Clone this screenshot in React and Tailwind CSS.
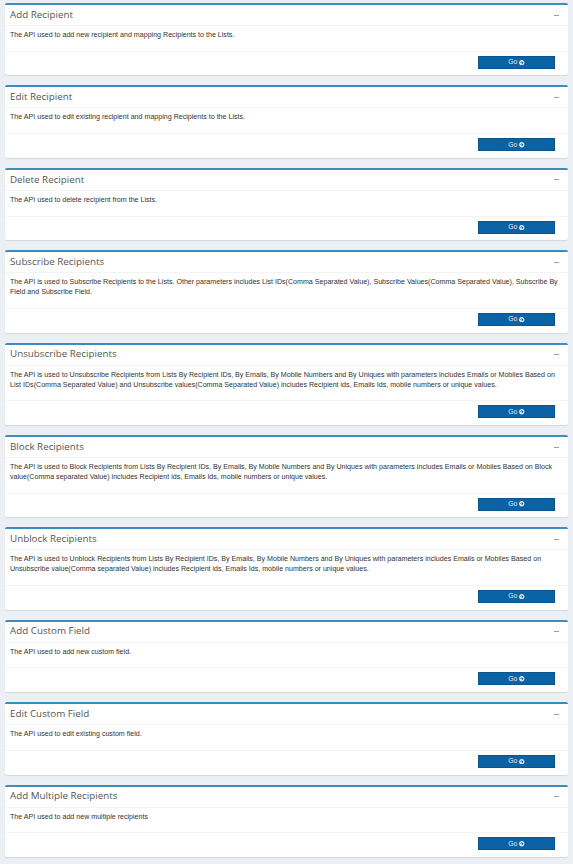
import { FaArrowCircleRight } from "react-icons/fa";

const apis = [
  { title: "Add Recipient", text: "The API used to add new recipient and mapping Recipients to the Lists." },
  { title: "Edit Recipient", text: "The API used to edit existing recipient and mapping Recipients to the Lists." },
  { title: "Delete Recipient", text: "The API used to delete recipient from the Lists." },
  {
    title: "Subscribe Recipients",
    text: "The API is used to Subscribe Recipients to the Lists. Other parameters includes List IDs(Comma Separated Value), Subscribe Values(Comma Separated Value), Subscribe By Field and Subscribe Field.",
  },
  {
    title: "Unsubscribe Recipients",
    text: "The API is used to Unsubscribe Recipients from Lists By Recipient IDs, By Emails, By Mobile Numbers and By Uniques with parameters includes Emails or Mobiles Based on List IDs(Comma Separated Value) and Unsubscribe values(Comma Separated Value) includes Recipient ids, Emails Ids, mobile numbers or unique values.",
  },
  {
    title: "Block Recipients",
    text: "The API is used to Block Recipients from Lists By Recipient IDs, By Emails, By Mobile Numbers and By Uniques with parameters includes Emails or Mobiles Based on Block value(Comma separated Value) includes Recipient ids, Emails Ids, mobile numbers or unique values.",
  },
  {
    title: "Unblock Recipients",
    text: "The API is used to Unblock Recipients from Lists By Recipient IDs, By Emails, By Mobile Numbers and By Uniques with parameters includes Emails or Mobiles Based on Unsubscribe value(Comma separated Value) includes Recipient ids, Emails Ids, mobile numbers or unique values.",
  },
  { title: "Add Custom Field", text: "The API used to add new custom field." },
  { title: "Edit Custom Field", text: "The API used to edit existing custom field." },
  { title: "Add Multiple Recipients", text: "The API used to add new multiple recipients" },
];

function ApiBox({ title, text }) {
  return (
    <div className="bg-white border-t-2 border-[#3c8dbc] rounded-[2px] shadow-[0_1px_1px_rgba(0,0,0,0.1)]">
      <div className="h-[21px] flex items-center justify-between pl-[5px] pr-[9px] border-b border-[#f4f4f4]">
        <h3 className="text-[9.8px] text-[#555] font-['Open_Sans',sans-serif]">{title}</h3>
        <span className="block w-[5px] h-[1px] bg-[#97a0b3]" />
      </div>
      <div className="px-[5px] pt-[5px] pb-[10px] border-b border-[#f4f4f4]">
        <p className="text-[7.1px] leading-[9.8px] text-[#333] font-['Liberation_Sans',Arial,sans-serif]">{text}</p>
      </div>
      <div className="h-[23.7px] flex justify-end items-start pt-[4px] pr-[13px]">
        <button className="w-[77px] h-[13px] bg-[#0b62a4] border border-[#0a5590] flex items-center justify-center gap-[2px] text-[6.8px] text-[#e6edf5] font-['Liberation_Sans',Arial,sans-serif]">
          Go <FaArrowCircleRight className="w-[5.5px] h-[5.5px]" />
        </button>
      </div>
    </div>
  );
}

export default function App() {
  return (
    <div className="min-h-screen bg-[#ecf0f5] px-[5px] pt-[3px] pb-[5px] flex flex-col gap-[10px]">
      {apis.map((a) => (
        <ApiBox key={a.title} title={a.title} text={a.text} />
      ))}
    </div>
  );
}
